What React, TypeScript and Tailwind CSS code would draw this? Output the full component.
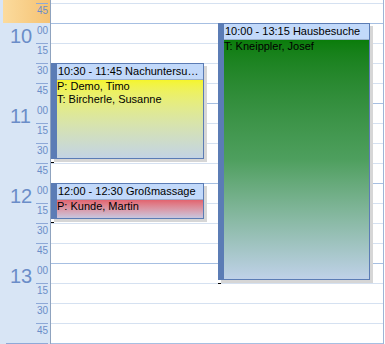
import React from "react";

const FONT = { fontFamily: '"Liberation Sans", Arial, sans-serif' };

function QuarterLabel({ label }: { label: string }) {
  return (
    <div className="h-[20px] flex flex-col items-end pr-[2px]">
      <div className="h-[1px] w-[12px] bg-[#8ea9d8]" />
      <div className="mt-[2px] text-[10px] leading-[10px] text-[#6b8dc8]">{label}</div>
    </div>
  );
}

function HourBlock({ hour }: { hour: string }) {
  return (
    <div className="flex flex-col">
      <div className="h-[20px] flex flex-col">
        <div className="h-[1px] ml-[6px] mr-[2px] bg-[#8ea9d8]" />
        <div className="flex justify-between pl-[10px] pr-[2px]">
          <div className="mt-[3px] text-[20px] leading-[20px] text-[#6b8dc8]">{hour}</div>
          <div className="mt-[3px] text-[10px] leading-[10px] text-[#6b8dc8]">00</div>
        </div>
      </div>
      <QuarterLabel label="15" />
      <QuarterLabel label="30" />
      <QuarterLabel label="45" />
    </div>
  );
}

function TimeColumn() {
  return (
    <div className="w-[51px] shrink-0 flex flex-col bg-[#d8e5f5] border-r border-[#8fa3bf]">
      <div className="h-[23px] ml-[3px] bg-gradient-to-r from-[#fbdb9d] to-[#f5c273] flex flex-col items-end pr-[2px]">
        <div className="mt-[3px] h-[1px] w-[12px] bg-[#8ea9d8]" />
        <div className="mt-[2px] text-[10px] leading-[10px] text-[#6b8dc8]">45</div>
      </div>
      <HourBlock hour="10" />
      <HourBlock hour="11" />
      <HourBlock hour="12" />
      <HourBlock hour="13" />
      <div className="h-[1px] ml-[6px] mr-[2px] bg-[#8ea9d8]" />
    </div>
  );
}

function Row({ hour }: { hour?: boolean }) {
  return (
    <div
      className={
        hour
          ? "h-[20px] border-t border-[#a6bfe2]"
          : "h-[20px] border-t border-[#d5e1f1]"
      }
    />
  );
}

export default function App() {
  const rows: boolean[] = [false];
  for (let h = 0; h < 4; h++) {
    rows.push(true, false, false, false);
  }
  return (
    <div className="w-[385px] h-[344px] bg-white flex overflow-hidden text-black" style={FONT}>
      <TimeColumn />
      <div className="w-[332px] shrink-0 relative flex flex-col">
        <div className="h-[3px]" />
        {rows.map((h, i) => (
          <Row key={i} hour={h} />
        ))}
        <div className="h-[1px] bg-[#a6bfe2]" />

        {/* Event 1 */}
        <div className="absolute left-0 top-[63px] w-[153px] h-[96px] flex border border-[#5b7cb5] shadow-[3px_3px_0_#d6d6d6]">
          <div className="w-[5px] shrink-0 bg-[#5b7cb5]" />
          <div className="flex-1 min-w-0 flex flex-col">
            <div className="h-[16px] shrink-0 bg-[#c2d9fa] border-b border-[#9aaecb] pl-[1px] text-[11px] leading-[15px] whitespace-nowrap overflow-hidden">
              10:30 - 11:45 Nachuntersu…
            </div>
            <div className="flex-1 bg-gradient-to-b from-[#f5f52a] to-[#c3d3e4] text-[11px] leading-[13px]">
              <div>P: Demo, Timo</div>
              <div>T: Bircherle, Susanne</div>
            </div>
          </div>
        </div>
        <div className="absolute left-0 top-[162px] w-[3px] h-[1px] bg-black" />

        {/* Event 2 */}
        <div className="absolute left-0 top-[183px] w-[153px] h-[36px] flex border border-[#5b7cb5] shadow-[3px_3px_0_#d6d6d6]">
          <div className="w-[5px] shrink-0 bg-[#5b7cb5]" />
          <div className="flex-1 min-w-0 flex flex-col">
            <div className="h-[16px] shrink-0 bg-[#c2d9fa] border-b border-[#9aaecb] pl-[1px] text-[11px] leading-[15px] whitespace-nowrap overflow-hidden">
              12:00 - 12:30 Großmassage
            </div>
            <div className="flex-1 bg-gradient-to-b from-[#e2636f] to-[#c6c6df] text-[11px] leading-[13px]">
              <div>P: Kunde, Martin</div>
            </div>
          </div>
        </div>
        <div className="absolute left-0 top-[222px] w-[3px] h-[1px] bg-black" />

        {/* Event 3 */}
        <div className="absolute left-[167px] top-[23px] w-[152px] h-[257px] flex border border-[#5b7cb5] shadow-[3px_3px_0_#d6d6d6]">
          <div className="w-[5px] shrink-0 bg-[#5b7cb5]" />
          <div className="flex-1 min-w-0 flex flex-col">
            <div className="h-[16px] shrink-0 bg-[#c2d9fa] border-b border-[#9aaecb] pl-[1px] text-[11px] leading-[15px] whitespace-nowrap overflow-hidden">
              10:00 - 13:15 Hausbesuche
            </div>
            <div className="flex-1 bg-gradient-to-b from-[#0a7d0a] via-[#4e9f5e] to-[#bfd1e8] text-[11px] leading-[13px]">
              <div>T: Kneippler, Josef</div>
            </div>
          </div>
        </div>
        <div className="absolute left-[167px] top-[283px] w-[3px] h-[1px] bg-black" />
      </div>
      <div className="w-[1px] shrink-0 bg-[#9db4d6]" />
      <div className="w-[1px] shrink-0 bg-white" />
    </div>
  );
}
